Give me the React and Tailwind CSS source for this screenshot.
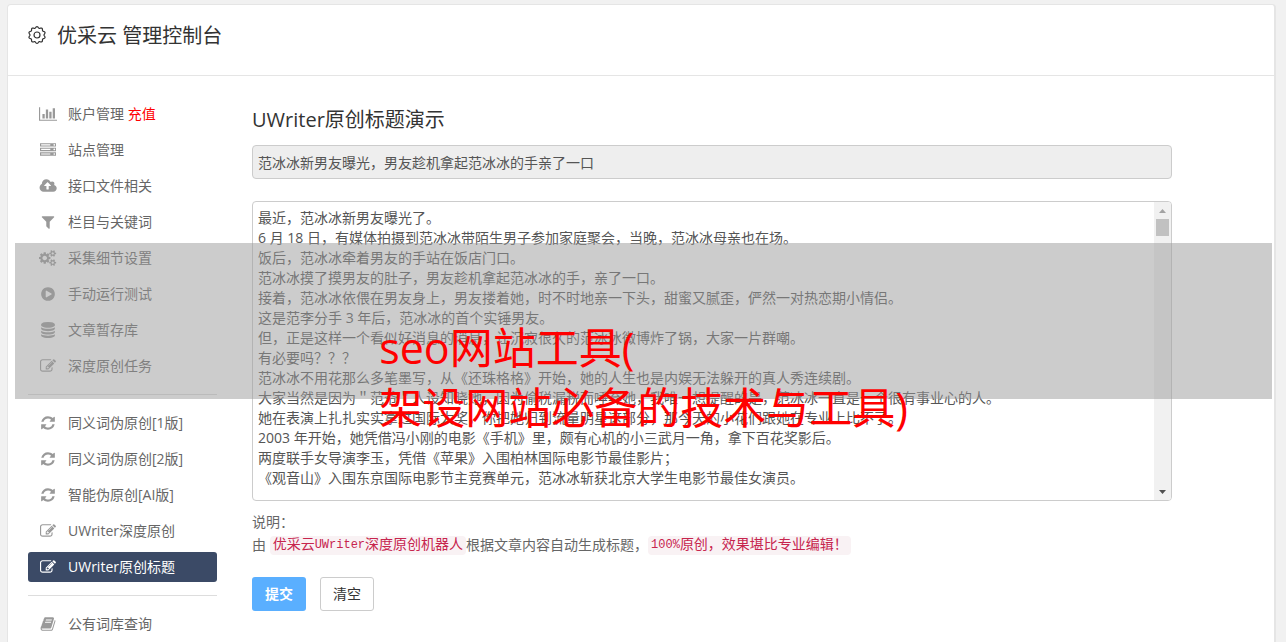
import React from "react";

const ICONS = {
  chart: {
    box: "0 0 2048 1792",
    d: "M640 896v512h-256v-512h256zm384-512v1024h-256v-1024h256zm1024 1152v128h-2048v-1536h128v1408h1920zm-640-896v768h-256v-768h256zm384-384v1152h-256v-1152h256z",
  },
  server: {
    box: "0 0 1792 1792",
    d: "M128 1408h1024v-128h-1024v128zm0-512h1024v-128h-1024v128zm1568 448q0-40-28-68t-68-28-68 28-28 68 28 68 68 28 68-28 28-68zm-1568-960h1024v-128h-1024v128zm1568 448q0-40-28-68t-68-28-68 28-28 68 28 68 68 28 68-28 28-68zm0-512q0-40-28-68t-68-28-68 28-28 68 28 68 68 28 68-28 28-68zm96 832v384h-1792v-384h1792zm0-512v384h-1792v-384h1792zm0-512v384h-1792v-384h1792z",
  },
  cloud: {
    box: "0 0 2048 1792",
    d: "M1344 864q0-14-9-23l-352-352q-9-9-23-9t-23 9l-351 351q-10 12-10 24 0 14 9 23t23 9h224v352q0 13 9.500 22.500t22.500 9.500h192q13 0 22.500-9.500t9.500-22.500v-352h224q13 0 22.500-9.500t9.500-22.500zm640 288q0 159-112.500 271.500t-271.500 112.500h-1088q-185 0-316.500-131.500t-131.500-316.500q0-130 70-240t188-165q-2-30-2-43 0-212 150-362t362-150q156 0 285.500 87t188.500 231q71-62 166-62 106 0 181 75t75 181q0 76-41 138 130 31 213.500 135.500t83.500 238.500z",
  },
  filter: {
    box: "0 0 1792 1792",
    d: "M1595 295q17 41-14 70l-493 493v742q0 42-39 59-13 5-25 5-27 0-45-19l-256-256q-19-19-19-45v-486l-493-493q-31-29-14-70 17-39 59-39h1280q42 0 59 39z",
  },
  cogs: {
    box: "0 0 1920 1792",
    d: "M896 896q0-106-75-181t-181-75-181 75-75 181 75 181 181 75 181-75 75-181zm768 512q0-52-38-90t-90-38-90 38-38 90q0 53 37.500 90.500t90.500 37.500 90.500-37.500 37.500-90.500zm0-1024q0-52-38-90t-90-38-90 38-38 90q0 53 37.500 90.500t90.500 37.500 90.500-37.500 37.500-90.500zm-384 421v185q0 10-7 19.500t-16 10.500l-155 24q-11 35-32 76 34 48 90 115 7 11 7 20 0 12-7 19-23 30-82.500 89.500t-78.500 59.500q-11 0-21-7l-115-90q-37 19-77 31-11 108-23 155-7 24-30 24h-186q-11 0-20-7.500t-10-17.500l-23-153q-34-10-75-31l-118 89q-7 7-20 7-11 0-21-8-144-133-144-160 0-9 7-19 10-14 41-53t47-61q-23-44-35-82l-152-24q-10-1-17-9.500t-7-19.500v-185q0-10 7-19.500t16-10.500l155-24q11-35 32-76-34-48-90-115-7-11-7-20 0-12 7-20 22-30 82-89t79-59q11 0 21 7l115 90q34-18 77-32 11-108 23-154 7-24 30-24h186q11 0 20 7.500t10 17.500l23 153q34 10 75 31l118-89q8-7 20-7 11 0 21 8 144 133 144 160 0 8-7 19-12 16-42 54t-45 60q23 48 34 82l152 23q10 2 17 10.500t7 19.500zm640 533v140q0 16-149 31-12 27-30 52 51 113 51 138 0 4-4 7-122 71-124 71-8 0-46-47t-52-68q-20 2-30 2t-30-2q-14 21-52 68t-46 47q-2 0-124-71-4-3-4-7 0-25 51-138-18-25-30-52-149-15-149-31v-140q0-16 149-31 13-29 30-52-51-113-51-138 0-4 4-7 4-2 35-20t59-34 30-16q8 0 46 46.500t52 67.500q20-2 30-2t30 2q51-71 92-112l6-2q4 0 124 70 4 3 4 7 0 25-51 138 17 23 30 52 149 15 149 31zm0-1024v140q0 16-149 31-12 27-30 52 51 113 51 138 0 4-4 7-122 71-124 71-8 0-46-47t-52-68q-20 2-30 2t-30-2q-14 21-52 68t-46 47q-2 0-124-71-4-3-4-7 0-25 51-138-18-25-30-52-149-15-149-31v-140q0-16 149-31 13-29 30-52-51-113-51-138 0-4 4-7 4-2 35-20t59-34 30-16q8 0 46 46.500t52 67.500q20-2 30-2t30 2q51-71 92-112l6-2q4 0 124 70 4 3 4 7 0 25-51 138 17 23 30 52 149 15 149 31z",
  },
  play: {
    box: "0 0 1792 1792",
    d: "M896 128q209 0 385.500 103t279.500 279.500 103 385.500-103 385.500-279.500 279.500-385.500 103-385.500-103-279.500-279.500-103-385.500 103-385.500 279.500-279.500 385.500-103zm384 823q32-18 32-55t-32-55l-544-320q-31-19-64-1-32 19-32 56v640q0 37 32 56 16 8 32 8 17 0 32-9z",
  },
  database: {
    box: "0 0 1792 1792",
    d: "M896 768q237 0 443-43t325-127v170q0 69-103 128t-280 93.500-385 34.500-385-34.500-280-93.500-103-128v-170q119 84 325 127t443 43zm0 768q237 0 443-43t325-127v170q0 69-103 128t-280 93.500-385 34.500-385-34.500-280-93.500-103-128v-170q119 84 325 127t443 43zm0-384q237 0 443-43t325-127v170q0 69-103 128t-280 93.500-385 34.500-385-34.500-280-93.500-103-128v-170q119 84 325 127t443 43zm0-1152q208 0 385 34.500t280 93.500 103 128v128q0 69-103 128t-280 93.500-385 34.500-385-34.500-280-93.500-103-128v-128q0-69 103-128t280-93.500 385-34.500z",
  },
  edit: {
    box: "0 0 1792 1792",
    d: "M888 1184l116-116-152-152-116 116v56h96v96h56zm440-720q-16-16-33 1l-350 350q-17 17-1 33t33-1l350-350q17-17 1-33zm80 594v190q0 119-84.500 203.500t-203.500 84.500h-832q-119 0-203.500-84.500t-84.500-203.500v-832q0-119 84.500-203.500t203.500-84.500h832q63 0 117 25 15 7 18 23 3 17-9 29l-49 49q-14 14-32 8-23-6-45-6h-832q-66 0-113 47t-47 113v832q0 66 47 113t113 47h832q66 0 113-47t47-113v-126q0-13 9-22l64-64q15-15 35-7t20 29zm-96-738l288 288-672 672h-288v-288zm444 132l-92 92-288-288 92-92q28-28 68-28t68 28l152 152q28 28 28 68t-28 68z",
  },
  refresh: {
    box: "0 0 1792 1792",
    d: "M1639 1056q0 5-1 7-64 268-268 434.500t-478 166.500q-146 0-282.500-55t-243.500-157l-129 129q-19 19-45 19t-45-19-19-45v-448q0-26 19-45t45-19h448q26 0 45 19t19 45-19 45l-137 137q71 66 161 102t187 36q134 0 250-65t186-179q11-17 53-117 8-23 30-23h192q13 0 22.500 9.500t9.500 22.500zm25-800v448q0 26-19 45t-45 19h-448q-26 0-45-19t-19-45 19-45l138-138q-148-137-349-137-134 0-250 65t-186 179q-11 17-53 117-8 23-30 23h-199q-13 0-22.500-9.500t-9.500-22.500v-7q65-268 270-434.500t480-166.500q146 0 284 55.500t245 156.500l130-129q19-19 45-19t45 19 19 45z",
  },
  book: {
    box: "0 0 1792 1792",
    d: "M1703 478q40 57 18 129l-275 906q-19 64-76.500 107.500t-122.500 43.500h-923q-77 0-148.500-53.500t-99.500-131.500q-24-67-2-127 0-4 3-27t4-37q1-8-3-21.500t-3-19.500q2-11 8-21t16.500-23.500 16.500-23.500q23-38 45-91.500t30-91.500q3-10 .5-30t-.5-28q3-11 17-28t17-23q21-36 42-92t25-90q1-9-2.500-32t.5-28q4-13 22-30.500t22-22.500q19-26 42.500-84.500t27.500-96.500q1-8-3-25.500t-2-26.500q2-8 9-18t18-23 17-21q8-12 16.500-30.500t15-35 16-36 19.500-32 26.500-23.500 36-11.500 47.500 5.500l-1 3q38-9 51-9h761q74 0 114 56t18 130l-274 906q-36 119-71.500 153.500t-128.500 34.500h-869q-27 0-38 15-11 16-1 43 24 70 144 70h923q29 0 56-15.500t35-41.500l300-987q7-22 5-57 38 15 59 43zm-1064 2q-4 13 2 22.500t20 9.500h608q13 0 25.500-9.500t16.500-22.500l21-64q4-13-2-22.500t-20-9.500h-608q-13 0-25.500 9.500t-16.500 22.500zm-83 256q-4 13 2 22.500t20 9.500h608q13 0 25.500-9.500t16.500-22.500l21-64q4-13-2-22.500t-20-9.500h-608q-13 0-25.500 9.500t-16.500 22.500z",
  },
};

function Icon({ name }) {
  const icon = ICONS[name];
  return (
    <svg viewBox={icon.box} className="h-4 w-auto" fill="currentColor" aria-hidden="true">
      <path d={icon.d} />
    </svg>
  );
}

// Ten-lobed gear outline around a small ring.
const gearPath = (() => {
  const points = [];
  for (let i = 0; i < 120; i++) {
    const a = (i / 120) * Math.PI * 2 - Math.PI / 2;
    const r = 7.7 + 0.7 * Math.cos(10 * (a + Math.PI / 2));
    points.push(`${(10 + r * Math.cos(a)).toFixed(2)} ${(10 + r * Math.sin(a)).toFixed(2)}`);
  }
  return `M${points.join("L")}Z`;
})();

function Gear() {
  return (
    <svg viewBox="0 0 20 20" className="h-5 w-5" fill="none" stroke="currentColor" strokeWidth="1.2" strokeLinejoin="round" aria-hidden="true">
      <path d={gearPath} />
      <circle cx="10" cy="10" r="3" />
    </svg>
  );
}

const GROUPS = [
  [
    { icon: "chart", label: "账户管理", extra: "充值" },
    { icon: "server", label: "站点管理" },
    { icon: "cloud", label: "接口文件相关" },
    { icon: "filter", label: "栏目与关键词" },
    { icon: "cogs", label: "采集细节设置" },
    { icon: "play", label: "手动运行测试" },
    { icon: "database", label: "文章暂存库" },
    { icon: "edit", label: "深度原创任务" },
  ],
  [
    { icon: "refresh", label: "同义词伪原创[1版]" },
    { icon: "refresh", label: "同义词伪原创[2版]" },
    { icon: "refresh", label: "智能伪原创[AI版]" },
    { icon: "edit", label: "UWriter深度原创" },
    { icon: "edit", label: "UWriter原创标题", active: true },
  ],
  [{ icon: "book", label: "公有词库查询" }],
];

const ARTICLE = [
  "最近，范冰冰新男友曝光了。",
  "6 月 18 日，有媒体拍摄到范冰冰带陌生男子参加家庭聚会，当晚，范冰冰母亲也在场。",
  "饭后，范冰冰牵着男友的手站在饭店门口。",
  "范冰冰摸了摸男友的肚子，男友趁机拿起范冰冰的手，亲了一口。",
  "接着，范冰冰依偎在男友身上，男友搂着她，时不时地亲一下头，甜蜜又腻歪，俨然一对热恋期小情侣。",
  "这是范李分手 3 年后，范冰冰的首个实锤男友。",
  "但，正是这样一个看似好消息的消息，让沉寂很久的范冰冰微博炸了锅，大家一片群嘲。",
  "有必要吗？？？",
  "范冰冰不用花那么多笔墨写，从《还珠格格》开始，她的人生也是内娱无法躲开的真人秀连续剧。",
  "大家当然是因为＂范爷＂人设知晓她，因为偷税漏税而唾弃她，我唯一想提醒的是，范冰冰一直是一个很有事业心的人。",
  "她在表演上扎扎实实拿过国际大奖，你把她归到流量明星这部分，那今天的小花们跟她在专业上比不了。",
  "2003 年开始，她凭借冯小刚的电影《手机》里，颇有心机的小三武月一角，拿下百花奖影后。",
  "两度联手女导演李玉，凭借《苹果》入围柏林国际电影节最佳影片；",
  "《观音山》入围东京国际电影节主竞赛单元，范冰冰斩获北京大学生电影节最佳女演员。",
].join("\n");

function NavItem({ item }) {
  return (
    <a
      href="#"
      className={
        item.active
          ? "flex h-[30px] items-center rounded-[3px] bg-[#3b4a66] px-[10px] text-white"
          : "flex h-[30px] items-center rounded-[3px] px-[10px] text-[#666]"
      }
    >
      <span className={item.active ? "mr-[10px] flex w-5 justify-center" : "mr-[10px] flex w-5 justify-center text-[#999]"}>
        <Icon name={item.icon} />
      </span>
      <span>
        {item.label}
        {item.extra && <span className="text-[#f00]"> {item.extra}</span>}
      </span>
    </a>
  );
}

function Sidebar() {
  return (
    <nav className="w-[189px] shrink-0">
      {GROUPS.map((group, index) => (
        <div
          key={index}
          className={index ? "mt-[13px] flex flex-col gap-[6px] border-t border-[#ddd] pt-[13px]" : "flex flex-col gap-[6px]"}
        >
          {group.map((item) => (
            <NavItem key={item.label} item={item} />
          ))}
        </div>
      ))}
    </nav>
  );
}

function Code({ children }) {
  return (
    <code className="inline-flex h-[19px] items-center rounded bg-[#f9f2f4] px-[3px] font-['Liberation_Mono','Noto_Sans_CJK_SC',monospace] text-sm text-[#c7254e]">
      {children}
    </code>
  );
}

function Editor() {
  return (
    <main className="w-full max-w-[920px] min-w-0">
      <h2 className="mt-[6px] text-xl leading-[30px] text-[#333]">
        <label htmlFor="title">UWriter原创标题演示</label>
      </h2>
      <input
        id="title"
        readOnly
        value="范冰冰新男友曝光，男友趁机拿起范冰冰的手亲了一口"
        className="mt-[10px] block h-[34px] w-full rounded border border-[#ccc] bg-[#eee] px-[5px] text-[#555] outline-none"
      />
      <div className="mt-[22px] flex h-[300px] overflow-hidden rounded border border-[#ccc] bg-white">
        <textarea
          aria-label="文章内容"
          defaultValue={ARTICLE}
          className="block min-w-0 flex-1 resize-none overflow-hidden px-[5px] py-[6px] leading-5 text-[#555] outline-none"
        />
        <div className="flex w-[17px] flex-col items-center bg-[#f1f1f1] py-[6px]" aria-hidden="true">
          <svg viewBox="0 0 7 4" className="mt-px h-1 w-[7px]" fill="#a3a3a3">
            <path d="M0 4h7L3.500 0z" />
          </svg>
          <div className="mt-[6px] h-[17px] w-[13px] bg-[#c1c1c1]" />
          <svg viewBox="0 0 7 4" className="mt-auto h-1 w-[7px]" fill="#505050">
            <path d="M0 0h7L3.500 4z" />
          </svg>
        </div>
      </div>
      <div className="mt-[10px] text-[#666]">
        <p className="leading-[22px]">说明：</p>
        <p className="flex h-6 items-center whitespace-nowrap">
          由&nbsp;
          <Code>
            优采云<span className="text-xs">UWriter</span>深度原创机器人
          </Code>
          根据文章内容自动生成标题，
          <Code>
            <span className="text-xs">100%</span>原创，效果堪比专业编辑！
          </Code>
        </p>
      </div>
      <div className="mt-5 flex gap-[14px]">
        <button type="submit" className="h-[34px] w-[54px] rounded-[3px] bg-[#5aafff] font-bold text-white">
          提交
        </button>
        <button type="reset" className="h-[34px] w-[54px] rounded-[3px] border border-[#ccc] bg-white text-[#333]">
          清空
        </button>
      </div>
    </main>
  );
}

export default function App() {
  return (
    <div
      lang="zh-CN"
      className="relative flex min-h-screen flex-col bg-[#f1f1f1] pt-1 pr-[10px] pl-[7px] font-['Open_Sans','Noto_Sans_CJK_SC',sans-serif] text-sm"
    >
      <div className="flex flex-1 flex-col rounded-t border border-r-2 border-b-0 border-[#e5e5e5] bg-white">
        <header className="flex h-[71px] items-start border-b border-[#e5e5e5] px-[19px] pt-4 text-[#333]">
          <div className="flex items-start gap-[10px]">
            <span className="flex h-[27px] items-center">
              <Gear />
            </span>
            <h1 className="text-xl leading-[30px]">优采云 管理控制台</h1>
          </div>
        </header>
        <div className="flex flex-1 gap-[35px] px-5 pt-[23px]">
          <Sidebar />
          <Editor />
        </div>
      </div>
      <div className="pointer-events-none absolute top-[243px] right-[14px] left-[15px] flex h-[156px] justify-center bg-[#999]/50 pt-[75px]">
        <p className="text-[43px] leading-[60px] whitespace-nowrap text-[#f00]">
          seo网站工具(
          <br />
          架设网站必备的技术与工具)
        </p>
      </div>
    </div>
  );
}
